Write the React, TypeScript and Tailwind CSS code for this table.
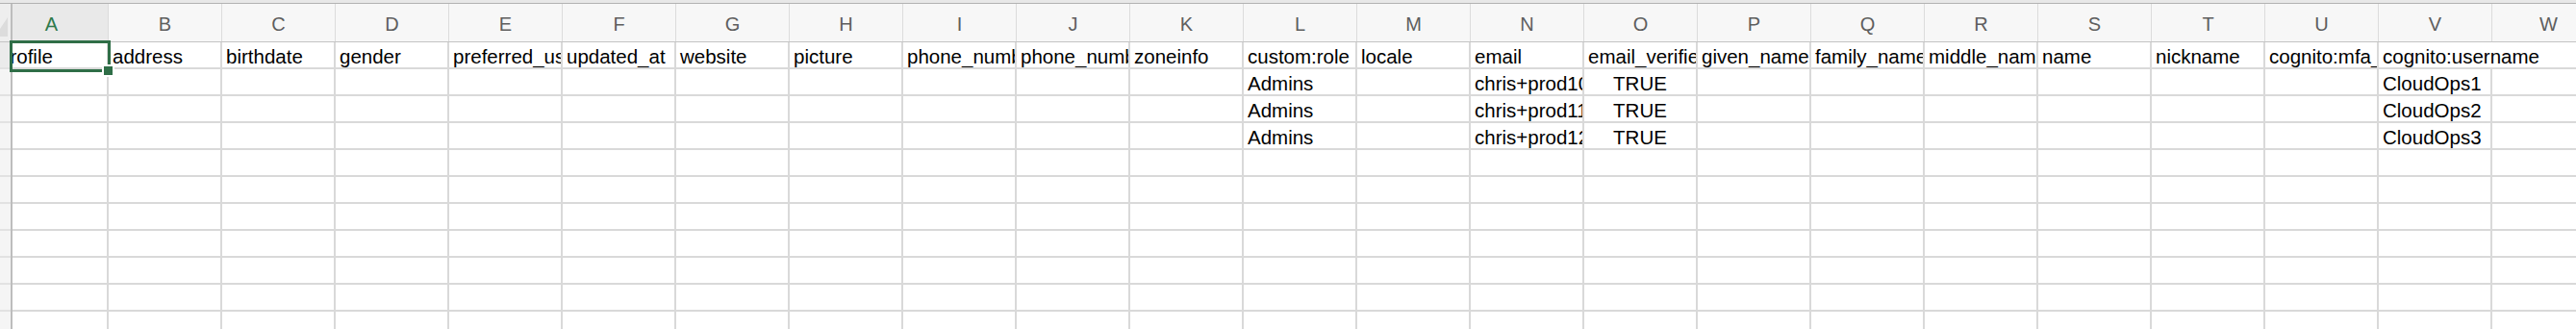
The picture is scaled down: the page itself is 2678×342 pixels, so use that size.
import React from "react"

const COLS = ["A", "B", "C", "D", "E", "F", "G", "H", "I", "J", "K", "L", "M", "N", "O", "P", "Q", "R", "S", "T", "U", "V", "W"]

const HEADERS = [
    "profile",
    "address",
    "birthdate",
    "gender",
    "preferred_username",
    "updated_at",
    "website",
    "picture",
    "phone_number",
    "phone_number_verified",
    "zoneinfo",
    "custom:role",
    "locale",
    "email",
    "email_verified",
    "given_name",
    "family_name",
    "middle_name",
    "name",
    "nickname",
    "cognito:mfa_enabled",
    "cognito:username",
    "",
]

const USERS = [
    { email: "chris+prod10@example.com", username: "CloudOps1" },
    { email: "chris+prod11@example.com", username: "CloudOps2" },
    { email: "chris+prod12@example.com", username: "CloudOps3" },
]

const ROW_COUNT = 11

type Cell = { text: string; center?: boolean; spill?: boolean }

function buildRows(): Cell[][] {
    const rows: Cell[][] = []
    // row 1: headers, last filled one spills into the empty W column
    rows.push(HEADERS.map((h, i) => ({ text: h, spill: i === 21 })))
    USERS.forEach((u) => {
        const r: Cell[] = COLS.map(() => ({ text: "" }))
        r[11] = { text: "Admins" }
        r[13] = { text: u.email }
        r[14] = { text: "TRUE", center: true }
        r[21] = { text: u.username }
        rows.push(r)
    })
    while (rows.length < ROW_COUNT) rows.push(COLS.map(() => ({ text: "" })))
    return rows
}

function RowHeaders() {
    return (
        <div className="w-[13px] shrink-0 flex flex-col border-r-2 border-[#bdbdbd] bg-[#f5f5f5]">
            <div className="h-[40px] shrink-0 border-b border-[#c4c4c4] bg-[#eeeeee] relative">
                <svg width="11" height="40" className="block">
                    <polygon points="8,14 8,34 0,34 0,26" fill="#dcdcdc" />
                </svg>
            </div>
            {Array.from({ length: ROW_COUNT }).map((_, i) => (
                <div
                    key={i}
                    className={`h-[28px] shrink-0 border-b-2 border-[#e2e2e2] ${i === 0 ? "bg-[#ebebeb]" : ""}`}
                />
            ))}
        </div>
    )
}

export default function App() {
    const rows = buildRows()

    return (
        <div
            className="w-[2678px] h-[342px] overflow-hidden bg-white flex flex-col text-black"
            style={{ fontFamily: '"Liberation Sans", Arial, sans-serif' }}
        >
            <div className="h-[4px] shrink-0 bg-[#e8e8e8] border-b border-[#b2b2b2]" />

            <div className="flex flex-1 min-h-0 relative">
                <RowHeaders />

                <div className="flex-1 overflow-hidden">
                    {/* sheet is scrolled a little to the right, so column A is partly hidden */}
                    <div className="-ml-[18px] w-max">
                        <div className="flex h-[40px] border-b border-[#c4c4c4]">
                            {COLS.map((c, i) => (
                                <div
                                    key={c}
                                    className={`w-[118px] shrink-0 flex items-center justify-center pt-[3px] border-r border-[#dcdcdc] text-[20px] ${
                                        i === 0 ? "bg-[#e9e9e9] text-[#2f7a4c]" : "bg-[#f7f7f7] text-[#5e5e5e]"
                                    }`}
                                >
                                    {c}
                                </div>
                            ))}
                        </div>

                        {rows.map((row, ri) => (
                            <div key={ri} className="flex h-[28px] border-b-2 border-[#d9d9d9]">
                                {row.map((cell, ci) => (
                                    <div
                                        key={ci}
                                        className={`w-[118px] shrink-0 whitespace-nowrap text-[20.5px] leading-[29px] px-[4px] ${
                                            cell.spill
                                                ? "overflow-visible relative z-[1]"
                                                : "overflow-hidden border-r-2 border-[#d9d9d9]"
                                        } ${cell.center ? "text-center" : ""}`}
                                    >
                                        {cell.text}
                                    </div>
                                ))}
                            </div>
                        ))}
                    </div>
                </div>

                {/* active cell A1 */}
                <div className="absolute left-[10px] top-[38px] w-[105px] h-[33px] border-[3px] border-[#2f6e47] z-10" />
                <div className="absolute left-[106px] top-[63px] w-[13px] h-[13px] bg-[#2f6e47] border-2 border-white z-20" />
            </div>
        </div>
    )
}
